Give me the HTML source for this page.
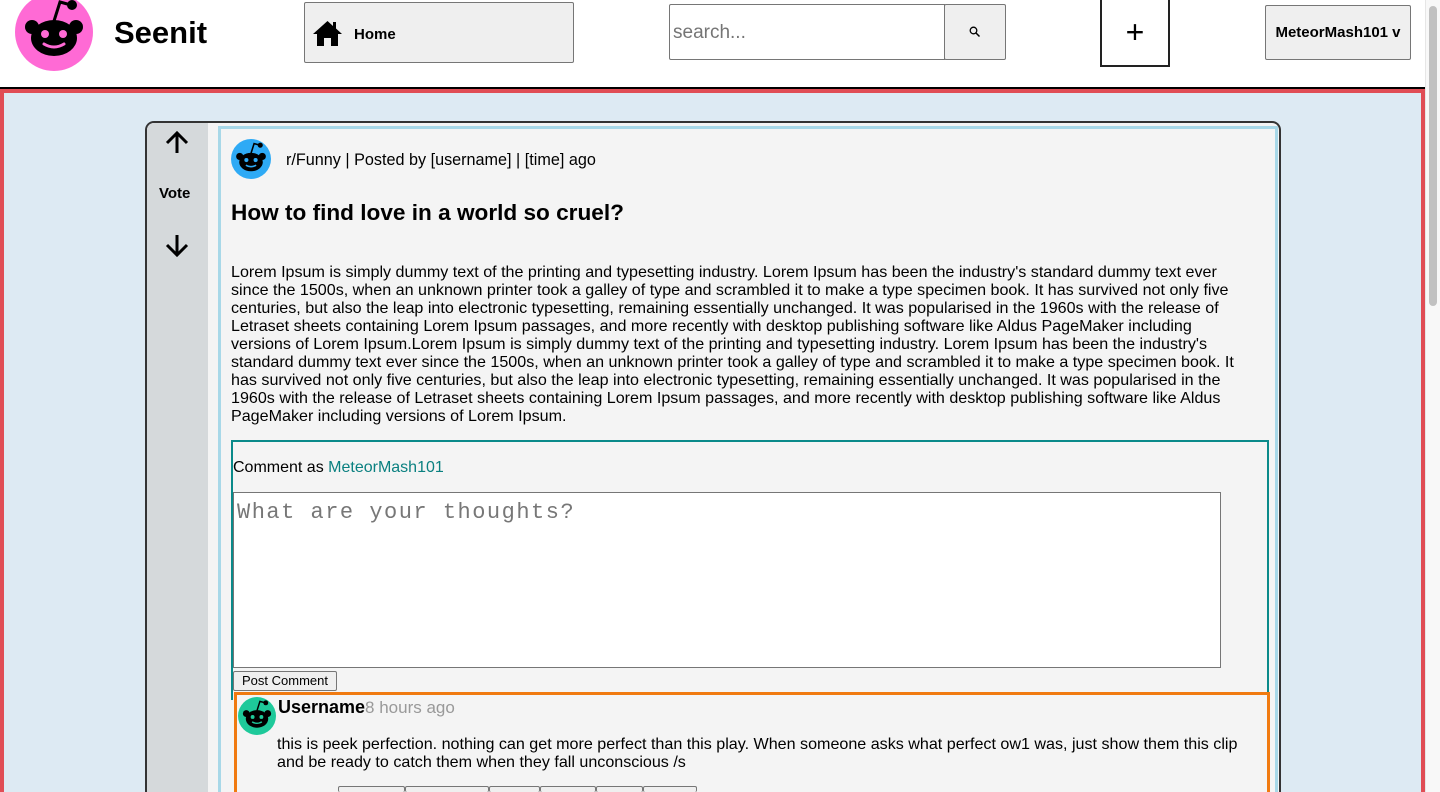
<!DOCTYPE html>
<html><head><meta charset="utf-8"><style>
*{box-sizing:border-box;margin:0;padding:0}
html,body{width:1440px;height:792px;overflow:hidden}
body{background:#fff;font-family:"Liberation Sans",Arial,sans-serif;position:relative}
.abs{position:absolute}
.btn{background:#efefef;border:1px solid #767676;border-radius:2px}
.sb{position:absolute;left:1425px;top:0;width:15px;height:792px;background:#f8f8f8;border-left:1px solid #e6e6e6}
.sb div{position:absolute;left:3px;top:6px;width:8px;height:300px;background:#c1c1c1;border-radius:4px}
</style></head><body>
<svg class="abs" style="left:15px;top:-7px" width="78" height="78" viewBox="0 0 78 78">
<circle cx="39" cy="39" r="39" fill="#ff6ad5"/>
<g fill="#000"><ellipse cx="39" cy="45" rx="23" ry="18"/><circle cx="17" cy="34" r="7"/><circle cx="61" cy="34" r="7"/><circle cx="57" cy="12" r="5"/></g>
<path d="M39 28 L45 9 L56 12" stroke="#000" stroke-width="3" fill="none"/>
<g fill="#ff6ad5"><circle cx="30" cy="41" r="4"/><circle cx="48" cy="41" r="4"/></g>
<path d="M29 51 Q39 57 49 51" stroke="#ff6ad5" stroke-width="3" fill="none" stroke-linecap="round"/>
</svg>
<div class="abs" style="left:114px;top:15px;font-size:31px;font-weight:bold">Seenit</div>
<div class="abs btn" style="left:304px;top:2px;width:270px;height:61px"></div>
<svg class="abs" style="left:312px;top:20px" width="31" height="26" viewBox="0 0 31 26"><path d="M15.5 1 L1 14 H5 V26 H12 V18 H19 V26 H26 V14 H30 L24 8.5 V2 H21 V6 Z" fill="#000"/></svg>
<div class="abs" style="left:354px;top:26px;font-size:15px;font-weight:bold">Home</div>
<div class="abs" style="left:669px;top:4px;width:276px;height:56px;border:1px solid #767676;border-radius:2px 0 0 2px;font-size:19px;color:#757575;padding:17px 0 0 3px">search...</div>
<div class="abs btn" style="left:944px;top:4px;width:62px;height:56px"></div>
<svg class="abs" style="left:969px;top:26px" width="12" height="12" viewBox="0 0 12 12"><circle cx="4.5" cy="4.5" r="3.3" fill="none" stroke="#000" stroke-width="1.3"/><path d="M7 7 L10.5 10.5" stroke="#000" stroke-width="1.5"/></svg>
<div class="abs" style="left:1100px;top:-4px;width:70px;height:71px;border:2px solid #222;background:#fff;text-align:center;font-size:32px;line-height:68px">+</div>
<div class="abs btn" style="left:1265px;top:5px;width:146px;height:55px;font-size:15px;font-weight:bold;text-align:center;line-height:53px">MeteorMash101 v</div>
<div class="abs" style="left:0;top:87px;width:1425px;height:2px;background:#000"></div>
<div class="abs" style="left:0;top:89px;width:1425px;height:703px;background:#ddeaf3;border:4px solid #e04d55;border-bottom:none"></div>
<div class="abs" style="left:145px;top:121px;width:1136px;height:671px;border:2px solid #333;border-bottom:none;border-radius:9px 9px 0 0;background:#f4f4f4;overflow:hidden">
 <div class="abs" style="left:0;top:0;width:61px;height:671px;background:#d5d9db"></div>
 <div class="abs" style="left:71px;top:3px;width:1060px;height:668px;border:3px solid #a8d8e8;border-bottom:none"></div>
</div>
<svg class="abs" style="left:164px;top:131px" width="26" height="24" viewBox="0 0 26 24"><path d="M13 22 V3 M3 12 L13 2 L23 12" stroke="#000" stroke-width="3" fill="none"/></svg>
<div class="abs" style="left:159px;top:185px;font-size:15px;font-weight:bold">Vote</div>
<svg class="abs" style="left:164px;top:233px" width="26" height="24" viewBox="0 0 26 24"><path d="M13 2 V21 M3 12 L13 22 L23 12" stroke="#000" stroke-width="3" fill="none"/></svg>
<svg class="abs" style="left:231px;top:139px" width="40" height="40" viewBox="0 0 78 78">
<circle cx="39" cy="39" r="39" fill="#2eaaf5"/>
<g fill="#000"><ellipse cx="39" cy="45" rx="23" ry="18"/><circle cx="17" cy="34" r="7"/><circle cx="61" cy="34" r="7"/><circle cx="57" cy="12" r="5"/></g>
<path d="M39 28 L45 9 L56 12" stroke="#000" stroke-width="3" fill="none"/>
<g fill="#2eaaf5"><circle cx="30" cy="41" r="4"/><circle cx="48" cy="41" r="4"/></g>
<path d="M29 51 Q39 57 49 51" stroke="#2eaaf5" stroke-width="3" fill="none"/>
</svg>
<div class="abs" style="left:286px;top:151px;font-size:16.2px">r/Funny | Posted by [username] | [time] ago</div>
<div class="abs" style="left:231px;top:200px;font-size:22.6px;font-weight:bold">How to find love in a world so cruel?</div>
<div class="abs" style="left:231px;top:263px;width:1012px;font-size:16.1px;line-height:18px">Lorem Ipsum is simply dummy text of the printing and typesetting industry. Lorem Ipsum has been the industry's standard dummy text ever since the 1500s, when an unknown printer took a galley of type and scrambled it to make a type specimen book. It has survived not only five centuries, but also the leap into electronic typesetting, remaining essentially unchanged. It was popularised in the 1960s with the release of Letraset sheets containing Lorem Ipsum passages, and more recently with desktop publishing software like Aldus PageMaker including versions of Lorem Ipsum.Lorem Ipsum is simply dummy text of the printing and typesetting industry. Lorem Ipsum has been the industry's standard dummy text ever since the 1500s, when an unknown printer took a galley of type and scrambled it to make a type specimen book. It has survived not only five centuries, but also the leap into electronic typesetting, remaining essentially unchanged. It was popularised in the 1960s with the release of Letraset sheets containing Lorem Ipsum passages, and more recently with desktop publishing software like Aldus PageMaker including versions of Lorem Ipsum.</div>
<div class="abs" style="left:231px;top:440px;width:1038px;height:260px;border:2px solid #0a8a8a;border-bottom:none"></div>
<div class="abs" style="left:233px;top:459px;font-size:16px">Comment as <span style="color:#0a8080">MeteorMash101</span></div>
<div class="abs" style="left:233px;top:492px;width:988px;height:176px;background:#fff;border:1px solid #767676;font-family:'Liberation Mono',monospace;font-size:22px;color:#777;padding:7px 3px;letter-spacing:1.5px">What are your thoughts?</div>
<div class="abs btn" style="left:233px;top:671px;width:104px;height:20px;font-size:13px;text-align:center;line-height:18px">Post Comment</div>
<div class="abs" style="left:234px;top:692px;width:1036px;height:100px;border:3px solid #f07a10;border-bottom:none;background:#f4f4f4"></div>
<svg class="abs" style="left:238px;top:697px" width="38" height="38" viewBox="0 0 78 78">
<circle cx="39" cy="39" r="39" fill="#1ec99a"/>
<g fill="#000"><ellipse cx="39" cy="45" rx="23" ry="18"/><circle cx="17" cy="34" r="7"/><circle cx="61" cy="34" r="7"/><circle cx="57" cy="12" r="5"/></g>
<path d="M39 28 L45 9 L56 12" stroke="#000" stroke-width="3" fill="none"/>
<g fill="#1ec99a"><circle cx="30" cy="41" r="4"/><circle cx="48" cy="41" r="4"/></g>
<path d="M29 51 Q39 57 49 51" stroke="#1ec99a" stroke-width="3" fill="none"/>
</svg>
<div class="abs" style="left:278px;top:697px;font-size:18px"><b>Username</b><span style="color:#999;font-weight:300;font-size:17px">8 hours ago</span></div>
<div class="abs" style="left:277px;top:735px;width:985px;font-size:16.1px;line-height:18px">this is peek perfection. nothing can get more perfect than this play. When someone asks what perfect ow1 was, just show them this clip and be ready to catch them when they fall unconscious /s</div>
<div class="abs btn" style="left:338px;top:786px;width:67px;height:6px;border-bottom:none"></div>
<div class="abs btn" style="left:405px;top:786px;width:84px;height:6px;border-bottom:none"></div>
<div class="abs btn" style="left:489px;top:786px;width:51px;height:6px;border-bottom:none"></div>
<div class="abs btn" style="left:540px;top:786px;width:56px;height:6px;border-bottom:none"></div>
<div class="abs btn" style="left:596px;top:786px;width:47px;height:6px;border-bottom:none"></div>
<div class="abs btn" style="left:643px;top:786px;width:54px;height:6px;border-bottom:none"></div>
<div class="sb"><div></div></div>
</body></html>
